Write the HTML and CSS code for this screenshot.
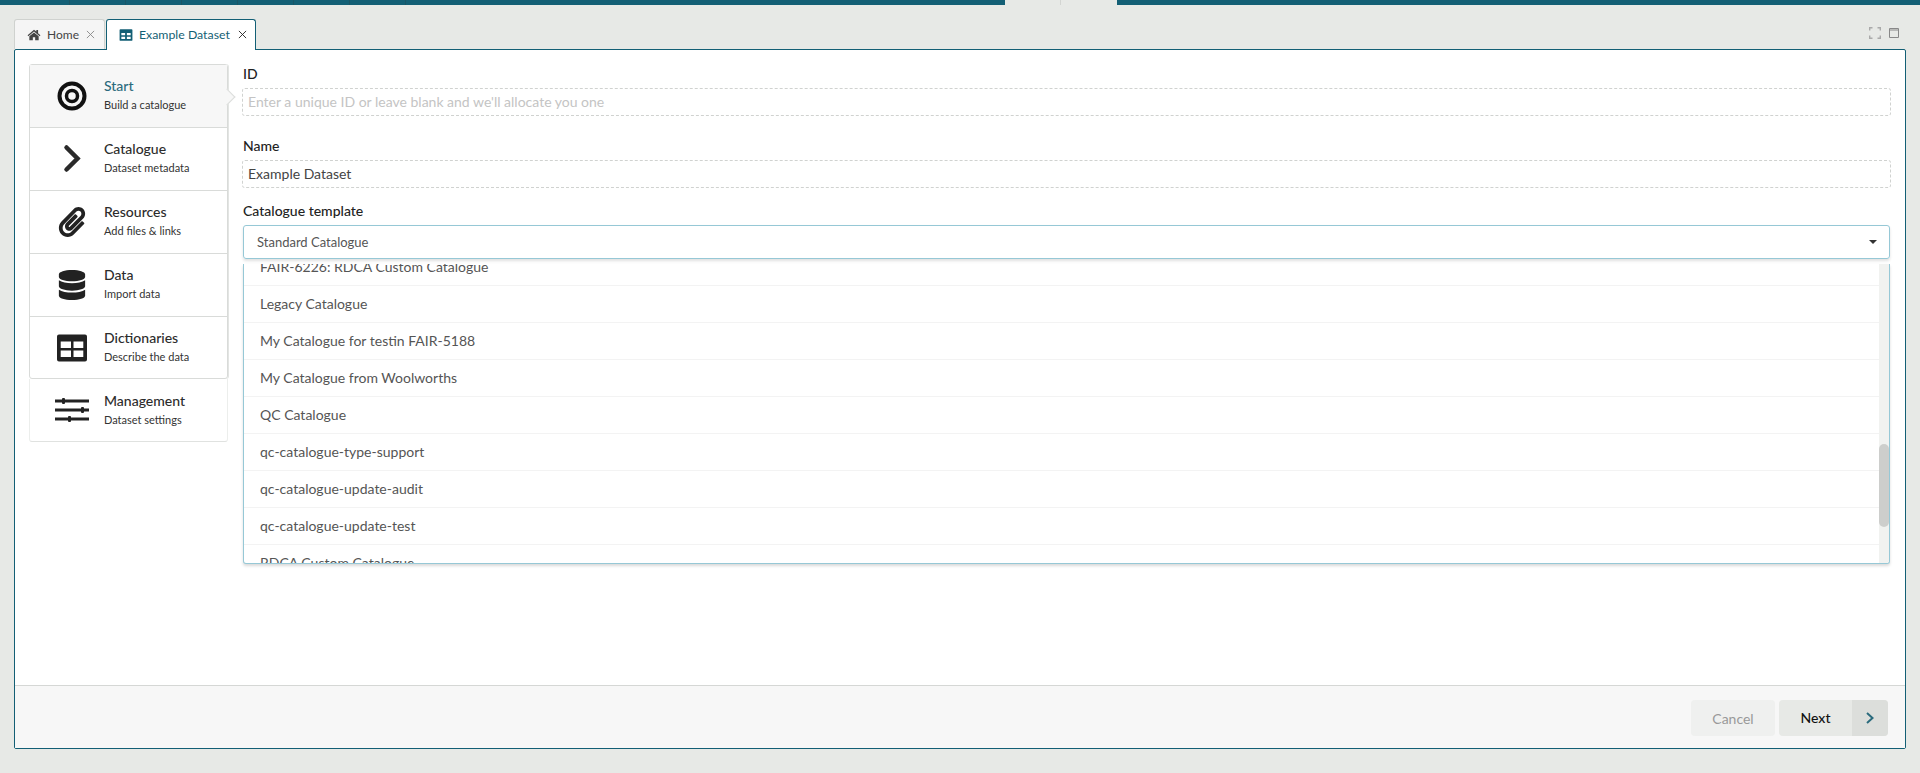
FILE: index.html
```html
<!DOCTYPE html>
<html lang="en">
<head>
  <meta charset="UTF-8">
  <title>Example Dataset</title>
  <link rel="stylesheet" href="styles.css">
</head>
<body>
  <div class="topbar">
    <div class="topbar-part topbar-left">
      <span></span><span></span><span></span><span></span><span></span><span></span><span></span>
    </div>
    <div class="topbar-gap"><span></span><span></span></div>
    <div class="topbar-part topbar-right"></div>
  </div>

  <div class="tabstrip">
    <div class="tab">
      <svg class="tab-icon" viewBox="0 0 24 24"><path d="M12 3 1 12.5l1.3 1.5L12 5.8l9.7 8.2 1.300-1.500-4-3.400V3.500h-3v2.600z"/><path d="M12 7.500 4 14.200V21h6v-5h4v5h6v-6.800z"/></svg>
      <span>Home</span>
      <svg class="tab-close" viewBox="0 0 10 10"><path d="M1 1l8 8M9 1l-8 8"/></svg>
    </div>
    <div class="tab tab-active">
      <svg class="tab-icon" viewBox="0 0 24 24"><path fill-rule="evenodd" d="M2.500 2h19A1.500 1.500 0 0 1 23 3.500v17a1.500 1.500 0 0 1-1.500 1.500h-19A1.500 1.500 0 0 1 1 20.500v-17A1.500 1.500 0 0 1 2.500 2zM4 8.500v4h6.500v-4zm9.500 0v4H20v-4zM4 15v4h6.500v-4zm9.500 0v4H20v-4z"/></svg>
      <span>Example Dataset</span>
      <svg class="tab-close" viewBox="0 0 10 10"><path d="M1 1l8 8M9 1l-8 8"/></svg>
    </div>
    <div class="window-tools">
      <svg viewBox="0 0 12 12" class="tool-expand"><path d="M.7 3.500V.7h2.800M8.500.7h2.800v2.800M11.300 8.500v2.800H8.500M3.500 11.300H.7V8.500"/></svg>
      <svg viewBox="0 0 10 10" class="tool-max"><path d="M.5.500h9v9h-9zM.5 2h9"/></svg>
    </div>
  </div>

  <div class="panel">
    <div class="panel-body">
      <nav class="steps">
        <div class="step-group">
          <div class="step step-current">
            <svg class="step-icon" viewBox="0 0 30 30"><circle cx="15" cy="15" r="12.500" class="ring"/><circle cx="15" cy="15" r="5.500" class="ring ring-inner"/></svg>
            <div class="step-text"><b>Start</b><small>Build a catalogue</small></div>
          </div>
          <div class="step">
            <svg class="step-icon" viewBox="0 0 30 30"><path d="M9.500 3.500 20.500 14.500 9.500 25.500" class="chevron"/></svg>
            <div class="step-text"><b>Catalogue</b><small>Dataset metadata</small></div>
          </div>
          <div class="step">
            <svg class="step-icon" viewBox="0 0 448 512"><path d="M43.246 466.142c-58.43-60.289-57.341-157.511 1.386-217.581L254.392 34c44.316-45.332 116.351-45.336 160.671 0 43.89 44.894 43.943 117.329 0 162.276L232.214 383.128c-29.855 30.537-78.633 30.111-107.982-.998-28.275-29.97-27.368-77.473 1.452-106.953l143.743-146.835c6.182-6.314 16.312-6.422 22.626-.241l22.861 22.379c6.315 6.182 6.422 16.312.241 22.626L171.427 319.927c-4.932 5.045-5.236 13.428-.648 18.292 4.372 4.634 11.245 4.711 15.688.165l182.849-186.851c19.613-20.062 19.613-52.725-.011-72.798-19.189-19.627-49.957-19.637-69.154 0L90.39 293.295c-34.763 35.56-35.299 93.12-1.191 128.313 34.01 35.093 88.985 35.137 123.058.286l172.06-175.999c6.177-6.319 16.307-6.433 22.626-.256l22.877 22.364c6.319 6.177 6.434 16.307.256 22.626l-172.06 175.998c-59.576 60.938-155.943 60.216-214.77-.485z"/></svg>
            <div class="step-text"><b>Resources</b><small>Add files &amp; links</small></div>
          </div>
          <div class="step">
            <svg class="step-icon" viewBox="0 0 448 512"><path d="M448 73.143v45.714C448 159.143 347.667 192 224 192S0 159.143 0 118.857V73.143C0 32.857 100.333 0 224 0s224 32.857 224 73.143zM448 176v102.857C448 319.143 347.667 352 224 352S0 319.143 0 278.857V176c48.125 33.143 136.208 48.572 224 48.572S399.874 209.143 448 176zm0 160v102.857C448 479.143 347.667 512 224 512S0 479.143 0 438.857V336c48.125 33.143 136.208 48.572 224 48.572S399.874 369.143 448 336z"/></svg>
            <div class="step-text"><b>Data</b><small>Import data</small></div>
          </div>
          <div class="step">
            <svg class="step-icon" viewBox="0 0 30 30"><path fill-rule="evenodd" d="M2 1.500h26A2 2 0 0 1 30 3.500v23a2 2 0 0 1-2 2H2a2 2 0 0 1-2-2v-23a2 2 0 0 1 2-2zM3.700 8.500V15H14V8.500zm12.800 0V15h9.800V8.500zM3.700 17.500V24H14v-6.500zm12.800 0V24h9.800v-6.500z"/></svg>
            <div class="step-text"><b>Dictionaries</b><small>Describe the data</small></div>
          </div>
        </div>
        <div class="step step-last">
          <svg class="step-icon step-icon-wide" viewBox="0 0 34 26"><path d="M0 2.500h34v3H0zM0 11.500h34v3H0zM0 20.500h34v3H0z"/><rect x="7" y="1" width="3" height="6" rx="1"/><rect x="26" y="10" width="3" height="6" rx="1"/><rect x="13" y="19" width="3" height="6" rx="1"/></svg>
          <div class="step-text"><b>Management</b><small>Dataset settings</small></div>
        </div>
      </nav>

      <form class="form">
        <label class="field-label label-id">ID</label>
        <div class="text-input placeholder">Enter a unique ID or leave blank and we'll allocate you one</div>
        <label class="field-label label-name">Name</label>
        <div class="text-input">Example Dataset</div>
        <label class="field-label label-template">Catalogue template</label>
        <div class="select-wrap">
          <div class="select">
            <span>Standard Catalogue</span>
            <i class="caret"></i>
          </div>
          <div class="dropdown">
            <ul class="options">
              <li>FAIR-6226: RDCA Custom Catalogue</li>
              <li>Legacy Catalogue</li>
              <li>My Catalogue for testin FAIR-5188</li>
              <li>My Catalogue from Woolworths</li>
              <li>QC Catalogue</li>
              <li>qc-catalogue-type-support</li>
              <li>qc-catalogue-update-audit</li>
              <li>qc-catalogue-update-test</li>
              <li>RDCA Custom Catalogue</li>
            </ul>
            <div class="scroll-track"><div class="scroll-thumb"></div></div>
          </div>
        </div>
      </form>
    </div>

    <div class="panel-footer">
      <button type="button" class="btn btn-cancel">Cancel</button>
      <button type="button" class="btn btn-next">
        <span class="btn-label">Next</span>
        <span class="btn-arrow"><svg viewBox="0 0 10 14"><path d="M2 2l5.500 5L2 12"/></svg></span>
      </button>
    </div>
  </div>
</body>
</html>
```

FILE: styles.css
```css
* {
  box-sizing: border-box;
}

html, body {
  height: 100%;
}

body {
  margin: 0;
  display: flex;
  flex-direction: column;
  background-color: #e7e9e6;
  font-family: Lato, "Open Sans", sans-serif;
  font-size: 14px;
  color: #222;
  overflow: hidden;
}

/* top nav strip */
.topbar {
  display: flex;
  height: 5px;
  flex: none;
}

.topbar-part {
  background-color: #135f75;
  display: flex;
}

.topbar-left {
  width: 1005px;
  padding-left: 14px;
}

.topbar-left span {
  width: 56px;
  border-right: 1px solid #1a5566;
}

.topbar-gap {
  width: 112px;
  display: flex;
}

.topbar-gap span {
  width: 56px;
}

.topbar-gap span:first-child {
  border-right: 1px solid #d3d5d2;
}

.topbar-right {
  flex: 1;
}

/* tabs */
.tabstrip {
  display: flex;
  align-items: flex-end;
  height: 44px;
  flex: none;
  padding-left: 14px;
  padding-right: 14px;
  gap: 1px;
}

.tab {
  height: 30px;
  padding: 0 9px 0 12px;
  display: flex;
  align-items: center;
  gap: 6px;
  font-size: 12px;
  color: #444;
  background-color: #f5f5f5;
  border: 1px solid #cfd2cf;
  border-bottom: none;
  border-radius: 3px 3px 0 0;
  position: relative;
}

.tab-icon {
  width: 14px;
  height: 14px;
  fill: #444;
}

.tab-close {
  width: 9px;
  height: 9px;
  margin-left: 1px;
  stroke: #888;
  stroke-width: 1;
  fill: none;
}

.tab-active {
  height: 31px;
  margin-bottom: -1px;
  padding: 0 8px 1px 12px;
  font-size: 12.300px;
  color: #135f75;
  background-color: #fff;
  border-color: #135f75;
  z-index: 2;
}

.tab-active .tab-icon {
  fill: #135f75;
}

.tab-active .tab-close {
  stroke: #222;
  margin-left: 2px;
}

.window-tools {
  margin-left: auto;
  align-self: flex-end;
  display: flex;
  gap: 8px;
  padding: 0 7px 10px 0;
  align-items: center;
}

.tool-expand {
  width: 12px;
  height: 12px;
  fill: none;
  stroke: #aaa;
  stroke-width: 1.400;
}

.tool-max {
  width: 10px;
  height: 10px;
  fill: none;
  stroke: #888;
  stroke-width: 1;
}

/* main panel */
.panel {
  flex: 1;
  margin: 0 14px 24px;
  display: flex;
  flex-direction: column;
  background-color: #fff;
  border: 1px solid #135f75;
  border-radius: 2px;
}

.panel-body {
  flex: 1;
  display: flex;
  padding: 14px 14px 0;
  gap: 14px;
  min-height: 0;
}

/* left hand steps */
.steps {
  width: 199px;
  flex: none;
}

.step-group {
  border: 1px solid #d9dbd9;
  border-radius: 3px;
  box-shadow: 1px 0 0 #e3e5e3;
}

.step {
  height: 63px;
  display: flex;
  align-items: center;
  padding-left: 27px;
  border-bottom: 1px solid #d9dbd9;
  position: relative;
}

.step-group .step:last-child {
  border-bottom: none;
  height: 61px;
}

.step-group .step-text {
  margin-bottom: 2px;
}

.step-current {
  background-color: #f7f7f7;
}

.step-current::after {
  content: "";
  position: absolute;
  right: -6px;
  top: 26px;
  width: 11px;
  height: 11px;
  background-color: #f7f7f7;
  border-top: 1px solid #dcdedc;
  border-right: 1px solid #dcdedc;
  transform: rotate(45deg);
}

.step-last {
  border: 1px solid #eceeec;
  border-top: none;
  border-bottom-color: #e0e2e0;
  border-radius: 0 0 3px 3px;
  height: 63px;
}

.step-icon {
  width: 30px;
  height: 30px;
  flex: none;
  fill: #222;
}

.step-icon-wide {
  width: 34px;
  height: 26px;
  margin-left: -2px;
  margin-right: -2px;
}

.ring {
  fill: none;
  stroke: #111;
  stroke-width: 4;
}

.ring-inner {
  stroke-width: 3.500;
}

.chevron {
  fill: none;
  stroke: #2a2a2a;
  stroke-width: 4.500;
  stroke-linecap: round;
}

.step-text {
  margin-left: 17px;
  display: flex;
  flex-direction: column;
  gap: 2px;
}

.step-text b {
  font-size: 14px;
  font-weight: 500;
  color: #2c2c2c;
  line-height: 18px;
}

.step-text small {
  font-size: 11px;
  color: #333;
  line-height: 16px;
}

.step-current b {
  color: #2b6b7d;
}

/* form */
.form {
  flex: 1;
  min-width: 0;
  display: flex;
  flex-direction: column;
}

.field-label {
  font-size: 14px;
  font-weight: 500;
  color: #222;
  line-height: 16px;
  height: 17px;
  margin-bottom: 5px;
  padding-left: 1px;
}

.label-id {
  margin-top: 2px;
}

.label-name {
  margin-top: 22px;
}

.label-template {
  margin-top: 15px;
}

.text-input {
  height: 28px;
  border: 1px dashed #d0d2d0;
  border-radius: 3px;
  padding: 0 5px;
  line-height: 25px;
  font-size: 14px;
  color: #444;
}

.placeholder {
  color: #c4c4c4;
}

.select-wrap {
  position: relative;
  margin: 0 1px;
}

.select {
  height: 34px;
  border: 1px solid #96c8d6;
  border-radius: 3px;
  box-shadow: 0 2px 3px rgba(0, 0, 0, 0.12);
  padding: 0 13px;
  display: flex;
  align-items: center;
  justify-content: space-between;
  font-size: 13px;
  color: #555;
}

.caret {
  width: 0;
  height: 0;
  border-left: 4px solid transparent;
  border-right: 4px solid transparent;
  border-top: 4px solid #333;
  margin-right: -1px;
}

/* the open options list sits over the page */
.dropdown {
  position: absolute;
  left: 0;
  right: 0;
  top: 39px;
  height: 300px;
  overflow: hidden;
  background-color: #fff;
  border: 1px solid #96c8d6;
  border-top: none;
  border-radius: 0 0 3px 3px;
  box-shadow: 0 2px 3px rgba(0, 0, 0, 0.15);
}

.options {
  list-style: none;
  margin: -15px 10px 0 0;
  padding: 0;
}

.options li {
  height: 37px;
  padding-left: 16px;
  line-height: 36px;
  font-size: 14px;
  color: #555;
  border-bottom: 1px solid #f3f3f3;
}

.scroll-track {
  position: absolute;
  top: 0;
  right: 0;
  bottom: 0;
  width: 10px;
  background-color: #f1f2f0;
}

.scroll-thumb {
  position: absolute;
  top: 180px;
  left: 0;
  width: 10px;
  height: 83px;
  border-radius: 5px;
  background-color: #cdcecc;
}

/* footer buttons */
.panel-footer {
  height: 63px;
  flex: none;
  display: flex;
  justify-content: flex-end;
  align-items: flex-start;
  gap: 4px;
  padding: 14px 17px 0 0;
  background-color: #f7f7f7;
  border-top: 1px solid #d5d7d5;
}

.btn {
  height: 36px;
  border: none;
  border-radius: 4px;
  font-family: inherit;
  font-size: 14px;
  padding: 0;
}

.btn-cancel {
  width: 84px;
  background-color: #eff0ef;
  color: #999;
}

.btn-next {
  width: 109px;
  display: flex;
  overflow: hidden;
  background-color: #e7e9e6;
  color: #111;
  font-weight: 500;
}

.btn-label {
  flex: 1;
  line-height: 36px;
}

.btn-arrow {
  width: 36px;
  height: 36px;
  background-color: #dcdedb;
  display: flex;
  align-items: center;
  justify-content: center;
}

.btn-arrow svg {
  width: 10px;
  height: 14px;
  fill: none;
  stroke: #2b6b7d;
  stroke-width: 2;
}
```
